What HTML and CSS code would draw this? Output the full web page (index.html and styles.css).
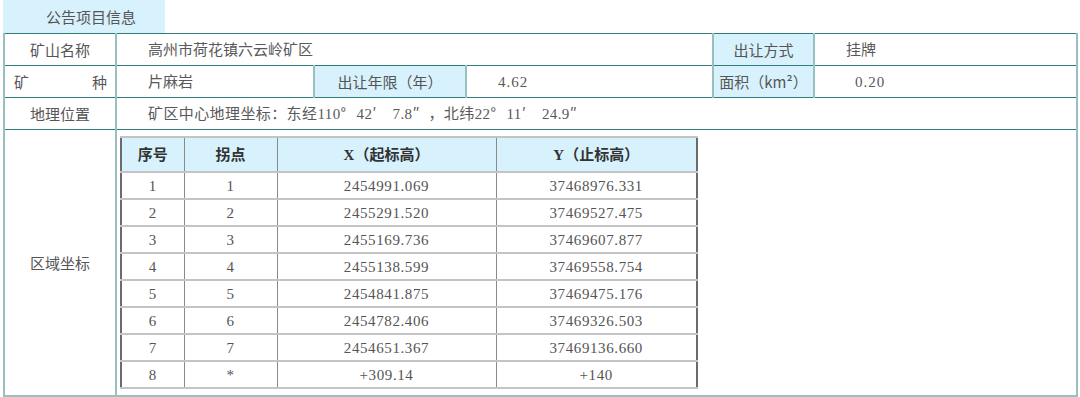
FILE: index.html
```html
<!DOCTYPE html>
<html lang="zh-CN">
<head>
<meta charset="utf-8">
<title>公告项目信息</title>
<link rel="stylesheet" href="styles.css">
</head>
<body>
<div class="page">
  <div class="tab">公告项目信息</div>
  <table class="info">
    <colgroup>
      <col class="c1"><col class="c2"><col class="c3"><col class="c4"><col class="c5"><col class="c6">
    </colgroup>
    <tr>
      <td class="label">矿山名称</td>
      <td class="val" colspan="3">高州市荷花镇六云岭矿区</td>
      <td class="label blue">出让方式</td>
      <td class="val">挂牌</td>
    </tr>
    <tr>
      <td class="label spread">矿种</td>
      <td class="val">片麻岩</td>
      <td class="label blue">出让年限（年）</td>
      <td class="val num">4.62</td>
      <td class="label blue">面积（km²）</td>
      <td class="val val-wide num">0.20</td>
    </tr>
    <tr>
      <td class="label">地理位置</td>
      <td class="val geo" colspan="5">矿区中心地理坐标：东经110<span class="fw">°</span>42<span class="fw">′</span>&nbsp;7.8<span class="fw">″</span>，北纬22<span class="fw">°</span>11<span class="fw">′</span>&nbsp;24.9<span class="fw">″</span></td>
    </tr>
    <tr class="tall">
      <td class="label">区域坐标</td>
      <td class="coords" colspan="5">
        <table class="pts">
          <colgroup>
            <col class="p1"><col class="p2"><col class="p3"><col class="p4">
          </colgroup>
          <tr class="head"><th>序号</th><th>拐点</th><th>X（起标高）</th><th>Y（止标高）</th></tr>
          <tr><td>1</td><td>1</td><td>2454991.069</td><td>37468976.331</td></tr>
          <tr><td>2</td><td>2</td><td>2455291.520</td><td>37469527.475</td></tr>
          <tr><td>3</td><td>3</td><td>2455169.736</td><td>37469607.877</td></tr>
          <tr><td>4</td><td>4</td><td>2455138.599</td><td>37469558.754</td></tr>
          <tr><td>5</td><td>5</td><td>2454841.875</td><td>37469475.176</td></tr>
          <tr><td>6</td><td>6</td><td>2454782.406</td><td>37469326.503</td></tr>
          <tr><td>7</td><td>7</td><td>2454651.367</td><td>37469136.660</td></tr>
          <tr><td>8</td><td>*</td><td>+309.14</td><td>+140</td></tr>
        </table>
      </td>
    </tr>
  </table>
</div>
</body>
</html>
```

FILE: styles.css
```css
html, body {
  margin: 0;
  padding: 0;
  background: #ffffff;
}

body {
  font-family: "Liberation Serif", "Noto Sans CJK SC", serif;
  font-size: 15px;
  color: #595959;
}

.page {
  padding-left: 3px;
  width: 1073px;
}

.tab {
  box-sizing: border-box;
  width: 162px;
  height: 33px;
  line-height: 33px;
  padding-left: 14px;
  background: #d7f1fd;
  text-align: center;
  font-family: "Noto Sans CJK SC", sans-serif;
  color: #555;
}

.info {
  width: 1073px;
  border-collapse: collapse;
  table-layout: fixed;
  border-bottom: 2px solid #98c0c0;
  border-left: 2px solid #98c0c0;
  border-right: 2px solid #98c0c0;
}

.c1 { width: 112px; }
.c2 { width: 198px; }
.c3 { width: 152px; }
.c4 { width: 247px; }
.c5 { width: 101px; }
.c6 { width: 263px; }

.info > tbody > tr > td {
  height: 31px;
  line-height: 20px;
  padding: 0;
  border-top: 1px solid #2f7d7a;
  border-bottom: 1px solid #2f7d7a;
  border-left: 2px solid #98c0c0;
  border-right: 2px solid #98c0c0;
  white-space: nowrap;
}

.info > tbody > tr.tall > td {
  height: 259px;
  border-bottom: 2px solid #98c0c0;
}

.label {
  text-align: center;
  font-family: "Noto Sans CJK SC", sans-serif;
  color: #555;
}

.blue {
  background: #d7f1fd;
}

.spread {
  text-align: justify;
  text-align-last: justify;
  padding: 0 8px 0 9px !important;
}

.val {
  padding-left: 31px !important;
}

.val-wide {
  padding-left: 40px !important;
}

.num {
  letter-spacing: 1px;
}

.geo {
  letter-spacing: 0.4px;
}

.fw {
  display: inline-block;
  width: 16px;
  text-align: left;
  font-family: "Noto Sans CJK SC", sans-serif;
}

.coords {
  vertical-align: top;
  padding: 6px 0 0 3px !important;
}

.pts {
  width: 576px;
  border-collapse: collapse;
  table-layout: fixed;
  border: 2px solid #6b6b6b;
}

.p1 { width: 63px; }
.p2 { width: 93px; }
.p3 { width: 219px; }
.p4 { width: 201px; }

.pts th,
.pts td {
  text-align: center;
  padding: 0;
  line-height: 18px;
  border-left: 1px solid #8a8a8a;
  border-right: 1px solid #8a8a8a;
  border-top: 2px solid #c4c4c4;
  border-bottom: 2px solid #c4c4c4;
  white-space: nowrap;
}

.pts th {
  height: 33px;
  background: #d7f1fd;
  font-weight: bold;
  color: #333;
  border-bottom: 1px solid #8a8a8a;
}

.pts td {
  height: 25px;
  letter-spacing: 0.6px;
  color: #555;
}
```
